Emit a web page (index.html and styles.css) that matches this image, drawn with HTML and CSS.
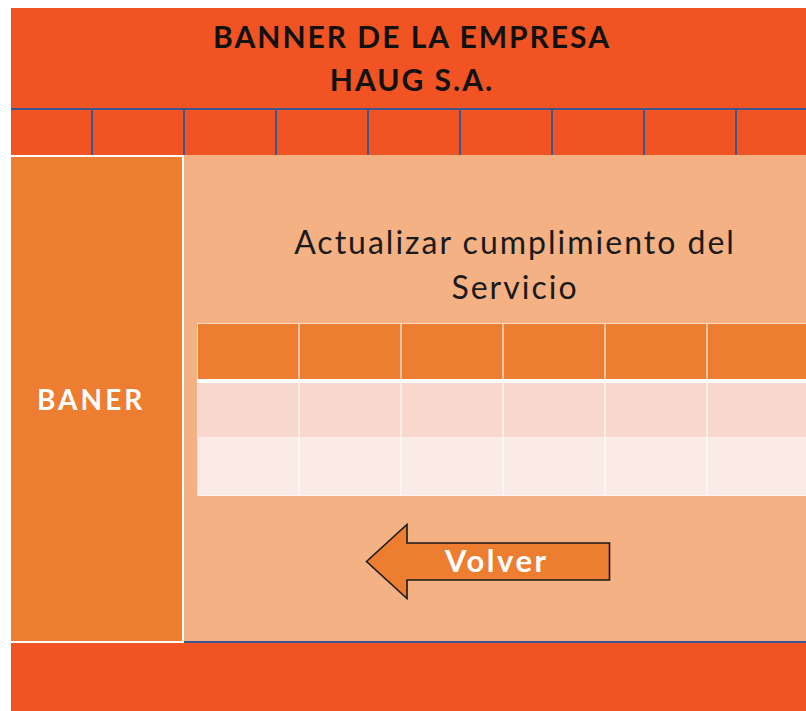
FILE: index.html
```html
<!DOCTYPE html>
<html>
    <head>
        <title>HAUG S.A.</title>
        <meta name="viewport" content="width=device-width, initial-scale=1">
        <link rel="stylesheet" href="styles.css">
    </head>
    <body>
        <div class="page">
            <header class="banner">
                BANNER DE LA EMPRESA<br>HAUG S.A.
            </header>

            <nav class="menu">
                <span class="menu-item first"></span>
                <span class="menu-item"></span>
                <span class="menu-item"></span>
                <span class="menu-item"></span>
                <span class="menu-item"></span>
                <span class="menu-item"></span>
                <span class="menu-item"></span>
                <span class="menu-item"></span>
                <span class="menu-item"></span>
            </nav>

            <div class="main">
                <aside class="side">BANER</aside>

                <section class="content">
                    <h1 class="title">Actualizar cumplimiento del<br>Servicio</h1>

                    <table class="grid">
                        <tr class="head">
                            <td></td><td></td><td></td><td></td><td></td><td></td><td></td>
                        </tr>
                        <tr class="odd">
                            <td></td><td></td><td></td><td></td><td></td><td></td><td></td>
                        </tr>
                        <tr class="even">
                            <td></td><td></td><td></td><td></td><td></td><td></td><td></td>
                        </tr>
                    </table>

                    <a class="back" href="#">
                        <svg class="back-arrow" width="246" height="77" viewBox="0 0 246 77">
                            <polygon points="1.5,38.5 42,1.5 42,20 244.5,20 244.5,57 42,57 42,75.5" fill="#ed7d31" stroke="#1a1a1a" stroke-width="1.6"/>
                        </svg>
                        <span class="back-text">Volver</span>
                    </a>
                </section>
            </div>

            <footer class="foot"></footer>
        </div>
    </body>
</html>
```

FILE: styles.css
```css
html, body {
    margin: 0;
    height: 100%;
    overflow: hidden;
    background-color: white;
}

.page {
    margin: 8px 0 0 11px;
    width: 795px;
    overflow: hidden;
    font-family: Lato, "Open Sans", sans-serif;
}

.banner {
    height: 102px;
    box-sizing: border-box;
    padding: 7px 0 0 7px;
    background-color: #f25322;
    color: #111;
    font-weight: bold;
    font-size: 30px;
    letter-spacing: 2px;
    line-height: 43px;
    text-align: center;
    border-bottom: 2px solid #3f5790;
}

.menu {
    display: flex;
    height: 45px;
    overflow: hidden;
    background-color: #f25322;
}

.menu-item {
    flex: 0 0 92px;
    box-sizing: border-box;
    border-left: 2px solid #3f5790;
}

.menu-item.first {
    flex-basis: 80px;
    border-left: none;
}

.main {
    display: flex;
    height: 488px;
    background-color: #f4b183;
    border-bottom: 2px solid #3f5790;
    box-sizing: border-box;
}

.side {
    flex: 0 0 173px;
    box-sizing: border-box;
    height: 488px;
    margin-bottom: -2px;
    background-color: #ed7d31;
    border-top: 2px solid #fff;
    border-right: 2px solid #fff;
    border-bottom: 2px solid #fff;
    color: #fff;
    font-weight: bold;
    font-size: 28px;
    letter-spacing: 3px;
    display: flex;
    align-items: center;
    padding: 0 0 0 26px;
}

.content {
    flex: 1;
    min-width: 0;
    overflow: hidden;
    padding: 64px 0 0 13px;
}

.title {
    margin: 0;
    width: 636px;
    font-weight: normal;
    font-size: 32px;
    letter-spacing: 2px;
    line-height: 45px;
    text-align: center;
    color: #1a1a1a;
}

.grid {
    margin-top: 14px;
    width: 714px;
    table-layout: fixed;
    border-collapse: collapse;
    border-top: 1px solid rgba(255, 255, 255, 0.5);
    border-bottom: 1px solid rgba(255, 255, 255, 0.5);
}

.grid td {
    padding: 0;
    border-left: 2px solid rgba(255, 255, 255, 0.55);
}

.grid td:first-child {
    border-left-width: 1px;
}

.grid .head td {
    height: 55px;
    background-color: #ed7d31;
    border-bottom: 4px solid #fff;
}

.grid .odd td {
    height: 54px;
    background-color: #f8d8cd;
}

.grid .even td {
    height: 58px;
    background-color: #fbebe6;
}

.back {
    position: relative;
    display: block;
    width: 246px;
    height: 77px;
    margin: 27px 0 0 168px;
    text-decoration: none;
}

.back-arrow {
    display: block;
}

.back-text {
    position: absolute;
    left: 80px;
    top: 18px;
    color: #fff;
    font-weight: bold;
    font-size: 31px;
    letter-spacing: 2.5px;
    line-height: 38px;
}

.foot {
    height: 80px;
    background-color: #f25322;
}
```
